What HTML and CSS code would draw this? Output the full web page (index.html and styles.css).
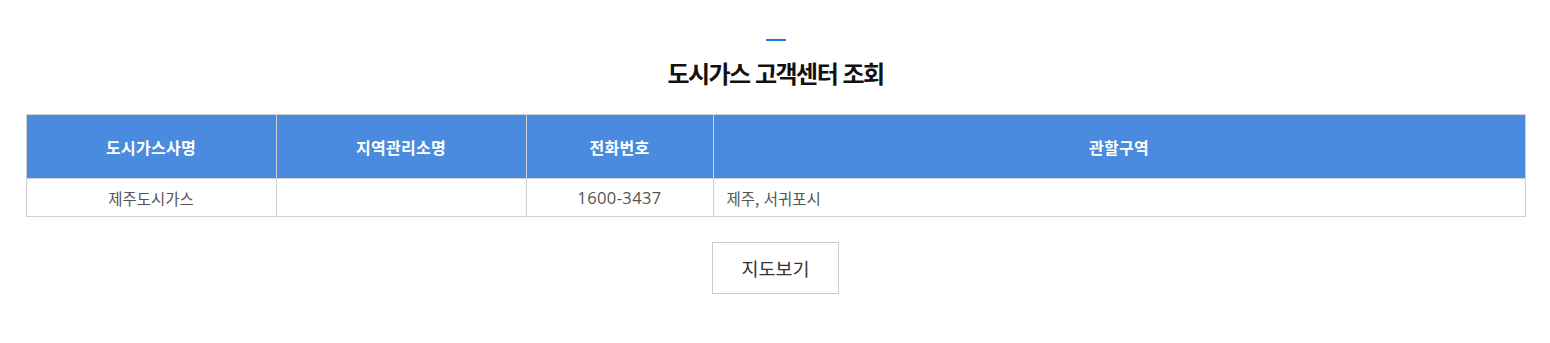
FILE: index.html
```html
<!DOCTYPE html>
<html lang="ko">
<head>
<meta charset="utf-8">
<link rel="stylesheet" href="styles.css">
</head>
<body>
<div class="wrap">
  <div class="title-bar"></div>
  <h2 class="title">도시가스 고객센터 조회</h2>
  <table class="tbl">
    <colgroup>
      <col class="c1"><col class="c2"><col class="c3"><col class="c4">
    </colgroup>
    <thead>
      <tr><th>도시가스사명</th><th>지역관리소명</th><th>전화번호</th><th>관할구역</th></tr>
    </thead>
    <tbody>
      <tr><td>제주도시가스</td><td></td><td class="tel">1600-3437</td><td class="left">제주, 서귀포시</td></tr>
    </tbody>
  </table>
  <div class="btns"><a class="btn">지도보기</a></div>
</div>
</body>
</html>
```
FILE: styles.css
```css
html, body { margin: 0; padding: 0; background: #fff; }
body { font-family: "Noto Sans CJK KR", "Noto Sans", sans-serif; color: #333; }
.wrap { width: 1500px; margin: 0 auto; padding-top: 39px; padding-left: 1px; }
.title-bar { width: 20px; height: 2px; background: #1a7be0; margin: 0 auto; }
.title { margin: 15px 0 0; text-align: center; font-size: 24px; font-weight: 700; letter-spacing: -1.5px; color: #111; line-height: 34px; }
.tbl { width: 1500px; border-collapse: collapse; margin-top: 24px; table-layout: fixed; }
.c1 { width: 250px; } .c2 { width: 250px; } .c3 { width: 187px; }
.tbl th { background: #4a8be0; color: #fff; font-size: 16px; font-weight: 700; height: 63px; border: 1px solid #d0d0d0; padding: 0; letter-spacing: 0.3px; }
.tbl td { height: 37px; border: 1px solid #d0d0d0; padding: 0 13px; font-size: 15.5px; color: #555; text-align: center; }
.tbl td.tel { font-family: "Open Sans", "Noto Sans CJK KR", sans-serif; font-size: 16.5px; letter-spacing: 0.4px; color: #555; }
.tbl td.left { text-align: left; }
.btns { text-align: center; margin-top: 25px; }
.btn { display: inline-block; width: 125px; height: 50px; line-height: 50px; border: 1px solid #ccc; font-size: 18.5px; color: #333; text-decoration: none; }
```
